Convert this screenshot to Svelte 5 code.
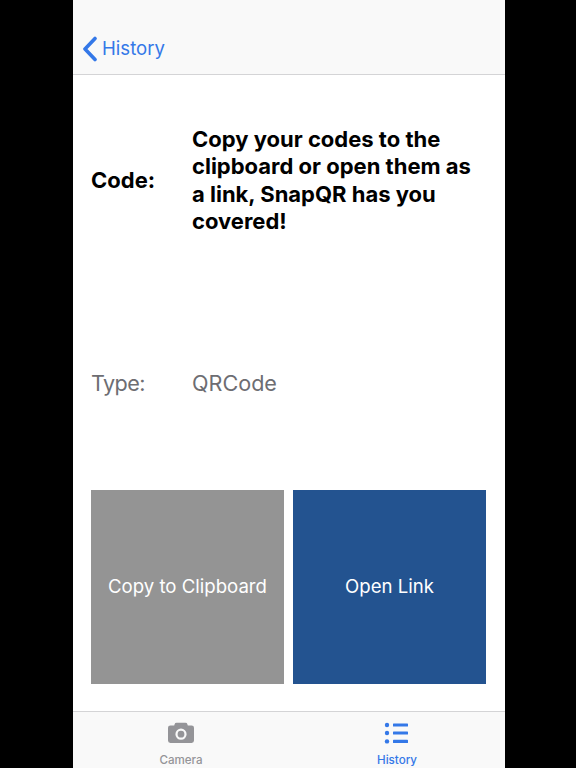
<script lang="ts">
    const title = "Copy your codes to the clipboard or open them as a link, SnapQR has you covered!";
</script>

<div class="screen">
    <div class="phone">
        <header class="nav">
            <svg class="chevron" width="16" height="26" viewBox="0 0 16 26" aria-hidden="true">
                <path d="M13 2.5 L3 13 L13 23.5" fill="none" stroke="#3478e8" stroke-width="3.6" stroke-linecap="round" stroke-linejoin="round" />
            </svg>
            <span class="back">History</span>
        </header>

        <main class="content">
            <div class="row code">
                <div class="label">Code:</div>
                <div class="value">{title}</div>
            </div>
            <div class="row type">
                <div class="label">Type:</div>
                <div class="value">QRCode</div>
            </div>
            <div class="buttons">
                <div class="btn grey">Copy to Clipboard</div>
                <div class="btn blue">Open Link</div>
            </div>
        </main>

        <footer class="tabs">
            <div class="tab">
                <svg width="28" height="22" viewBox="0 0 28 22" aria-hidden="true">
                    <path fill="#949498" fill-rule="evenodd" d="M9.5 0.8 H18.5 Q20 0.8 20.4 2.2 L20.8 3.4 H24.6 Q27 3.4 27 5.8 V18.6 Q27 21 24.6 21 H3.4 Q1 21 1 18.6 V5.8 Q1 3.4 3.4 3.4 H7.2 L7.6 2.2 Q8 0.8 9.5 0.8 Z M14 6.6 A5.6 5.6 0 1 0 14 17.8 A5.6 5.6 0 1 0 14 6.6 Z M14 8.8 A3.4 3.4 0 1 1 14 15.6 A3.4 3.4 0 1 1 14 8.8 Z" />
                </svg>
                <span>Camera</span>
            </div>
            <div class="tab active">
                <svg width="26" height="22" viewBox="0 0 26 22" aria-hidden="true">
                    <circle cx="3" cy="3" r="2.2" fill="#3478e8" />
                    <circle cx="3" cy="11" r="2.2" fill="#3478e8" />
                    <circle cx="3" cy="19.4" r="2.2" fill="#3478e8" />
                    <rect x="9" y="1.4" width="15" height="3.2" rx="0.6" fill="#3478e8" />
                    <rect x="9" y="9.4" width="15" height="3.2" rx="0.6" fill="#3478e8" />
                    <rect x="9" y="17.8" width="15" height="3.2" rx="0.6" fill="#3478e8" />
                </svg>
                <span>History</span>
            </div>
        </footer>
    </div>
</div>

<style>
    :global(body) {
        margin: 0;
        background: #000;
    }
    .screen {
        width: 576px;
        height: 768px;
        display: flex;
        padding-left: 73px;
        box-sizing: border-box;
        overflow: hidden;
        background: #000;
        font-family: Inter, "Liberation Sans", sans-serif;
    }
    .phone {
        width: 432px;
        height: 768px;
        background: #fff;
        display: flex;
        flex-direction: column;
    }
    .nav {
        height: 75px;
        box-sizing: border-box;
        flex: none;
        background: #f9f9f9;
        border-bottom: 1px solid #d4d4d6;
        display: flex;
        align-items: flex-end;
        gap: 4px;
        padding: 0 0 12px 9px;
    }
    .back {
        color: #3478e8;
        font-size: 18.6px;
        line-height: 26px;
        margin-bottom: 1px;
    }
    .content {
        flex: 1;
        display: flex;
        flex-direction: column;
        padding: 0 19px 0 18px;
    }
    .row {
        display: flex;
    }
    .label {
        width: 101px;
        flex: none;
    }
    .code {
        height: 159px;
        margin-top: 51px;
        align-items: flex-start;
        font-size: 22px;
        font-weight: 700;
        color: #000;
        line-height: 27.3px;
    }
    .code .label {
        margin-top: 41px;
    }
    .type {
        margin-top: 85px;
        font-size: 21.6px;
        color: #6d6d72;
        line-height: 27px;
    }
    .type .label {
        letter-spacing: -0.6px;
    }
    .buttons {
        display: flex;
        gap: 9px;
        margin-top: 93px;
    }
    .btn {
        flex: 1;
        height: 194px;
        box-sizing: border-box;
        padding-bottom: 2px;
        display: flex;
        align-items: center;
        justify-content: center;
        color: #fff;
        font-size: 18.6px;
    }
    .grey {
        background: #949494;
    }
    .blue {
        background: #235390;
    }
    .tabs {
        height: 57px;
        box-sizing: border-box;
        flex: none;
        background: #f9f9f9;
        border-top: 1px solid #d4d4d6;
        display: flex;
        overflow: hidden;
    }
    .tab {
        flex: 1;
        display: flex;
        flex-direction: column;
        align-items: center;
        padding-top: 10px;
        gap: 9px;
        color: #949498;
        font-size: 11.6px;
        font-weight: 500;
        line-height: 14px;
    }
    .tab.active {
        color: #3478e8;
    }
</style>
